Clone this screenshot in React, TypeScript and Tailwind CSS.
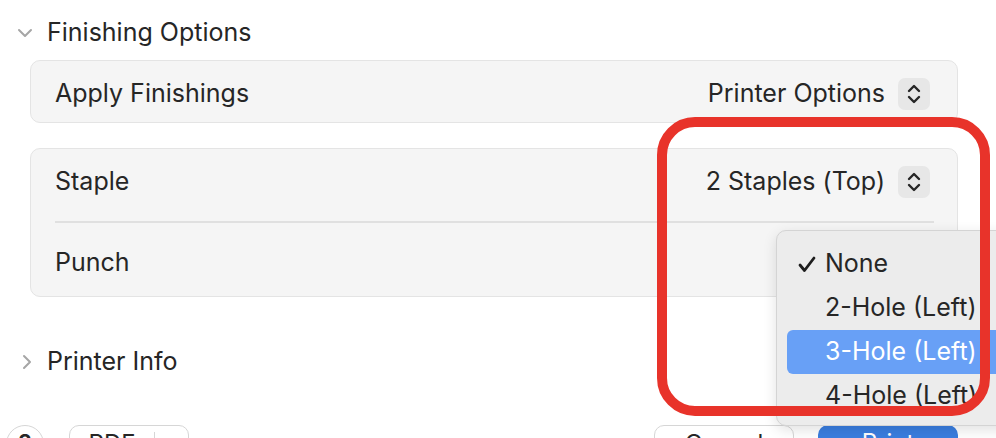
import React from "react";

const font = { fontFamily: "Inter, 'Noto Sans', sans-serif" };

function Stepper() {
  return (
    <div className="flex h-[32px] w-[32px] items-center justify-center rounded-[7px] bg-[#e7e7e7]">
      <svg width="16" height="22" viewBox="0 0 16 22" fill="none" stroke="#262626" strokeWidth="2.4" strokeLinecap="round" strokeLinejoin="round">
        <path d="M3 8 L8 3 L13 8" />
        <path d="M3 14 L8 19 L13 14" />
      </svg>
    </div>
  );
}

function Chevron({ dir }: { dir: "down" | "right" }) {
  return dir === "down" ? (
    <svg width="16" height="10" viewBox="0 0 16 10" fill="none" stroke="#a6a6a6" strokeWidth="2" strokeLinecap="round" strokeLinejoin="round">
      <path d="M2 2 L8 8 L14 2" />
    </svg>
  ) : (
    <svg width="10" height="16" viewBox="0 0 10 16" fill="none" stroke="#a6a6a6" strokeWidth="2" strokeLinecap="round" strokeLinejoin="round">
      <path d="M2 2 L8 8 L2 14" />
    </svg>
  );
}

export default function App() {
  return (
    <div className="relative h-[438px] w-[996px] overflow-hidden bg-white text-[25px] text-[#262626]" style={font}>
      {/* section header */}
      <div className="flex h-[60px] items-center pt-[6px]">
        <div className="flex w-[47px] justify-center pl-[3px]">
          <Chevron dir="down" />
        </div>
        <span>Finishing Options</span>
      </div>

      <div className="ml-[30px] mr-[38px] flex h-[63px] items-center justify-between rounded-[10px] border border-[#e4e4e4] bg-[#f5f5f5] pl-[24px] pr-[27px] pt-[5px]">
        <span>Apply Finishings</span>
        <div className="flex items-center gap-[13px]">
          <span>Printer Options</span>
          <Stepper />
        </div>
      </div>

      <div className="ml-[30px] mr-[38px] mt-[25px] flex h-[149px] flex-col rounded-[10px] border border-[#e4e4e4] bg-[#f5f5f5] pl-[24px] pr-[23px]">
        <div className="flex h-[65px] items-center justify-between pr-[4px]">
          <span>Staple</span>
          <div className="flex items-center gap-[13px]">
            <span>2 Staples (Top)</span>
            <Stepper />
          </div>
        </div>
        <div className="my-[7px] h-[2px] bg-[#e0e0e0]" />
        <div className="flex flex-1 items-center">
          <span>Punch</span>
        </div>
      </div>

      <div className="mt-[35px] flex h-[60px] items-center">
        <div className="flex w-[47px] justify-center pl-[6px]">
          <Chevron dir="right" />
        </div>
        <span>Printer Info</span>
      </div>

      {/* bottom buttons, cut off by the window */}
      <div className="mt-[33px] flex items-start leading-none">
        <div className="ml-[6px] flex h-[38px] w-[38px] items-start justify-center rounded-full border border-[#d6d6d6] pt-[6px] text-[24px] font-semibold">
          ?
        </div>
        <div className="ml-[25px] flex h-[40px] w-[120px] rounded-[10px] border border-[#d6d6d6] bg-white">
          <span className="w-[84px] pt-[6px] text-center text-[24px]">PDF</span>
          <div className="mt-[6px] h-[30px] w-px bg-[#d6d6d6]" />
        </div>
        <div className="ml-auto flex h-[40px] w-[140px] justify-center rounded-[10px] border border-[#d6d6d6] bg-white pt-[6px] text-[24px]">
          Cancel
        </div>
        <div className="ml-[24px] mr-[38px] flex h-[40px] w-[140px] justify-center rounded-[10px] bg-[#3a7ee0] pt-[6px] text-[24px] text-white">
          Print
        </div>
      </div>

      {/* open pop-up menu */}
      <div className="absolute left-[776px] top-[230px] h-[196px] w-[260px] rounded-[10px] border border-[#d4d4d4] bg-[#ececec] px-[10px] pt-[11px] shadow-[0_4px_14px_rgba(0,0,0,0.12)]">
        {[
          { label: "None", checked: true },
          { label: "2-Hole (Left)" },
          { label: "3-Hole (Left)", active: true },
          { label: "4-Hole (Left)" },
        ].map((item) => (
          <div
            key={item.label}
            className={
              item.active
                ? "flex h-[44px] items-center rounded-[6px] bg-[#68a0f6] text-white"
                : "flex h-[44px] items-center"
            }
          >
            <span className="flex w-[38px] justify-end pr-[9px]">
              {item.checked && (
                <svg width="18" height="17" viewBox="0 0 18 17" fill="none" stroke="#1e1e1e" strokeWidth="2.8" strokeLinecap="round" strokeLinejoin="round">
                  <path d="M2 9 L6.5 14.5 L16 2" />
                </svg>
              )}
            </span>
            <span className="whitespace-nowrap">{item.label}</span>
          </div>
        ))}
      </div>

      {/* red annotation outline */}
      <div className="pointer-events-none absolute left-[657px] top-[117px] h-[299px] w-[333px] rounded-[38px] border-[10px] border-[#e8332a]" />
    </div>
  );
}
